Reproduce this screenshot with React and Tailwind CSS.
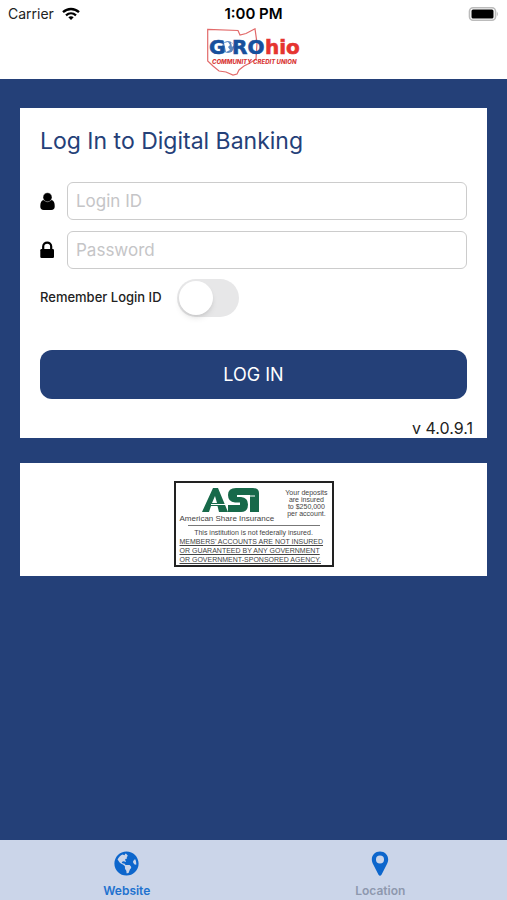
import { useState } from 'react'
import { FaGlobeAmericas } from 'react-icons/fa'

function StatusBar() {
  return (
    <div className="grid h-7 grid-cols-3 items-center px-2 text-sm text-[#222]">
      <div className="flex items-center gap-2">
        <span>Carrier</span>
        <svg viewBox="0 0 18 14" className="h-3.5 w-4.5" fill="none" stroke="#000" strokeWidth="2.3">
          <path d="M1 5.2C5.5 0.9 12.5 0.9 17 5.2" />
          <path d="M4 8.3C7 5.7 11 5.7 14 8.3" />
          <path d="M6.3 10.2C8 8.9 10 8.9 11.7 10.2L9 13Z" fill="#000" stroke="none" />
        </svg>
      </div>
      <span className="text-center text-[15px] font-semibold text-black">1:00 PM</span>
      <svg viewBox="0 0 31 14" className="h-3.5 w-[31px] justify-self-end">
        <rect x="1.5" y="0.8" width="26" height="12.4" rx="3.5" fill="#fff" stroke="#bbb" strokeWidth="1.6" />
        <rect x="3.5" y="2.5" width="22" height="9" rx="1.5" fill="#000" />
        <path d="M28.8 4.5Q31 7 28.8 9.5Z" fill="#bbb" />
      </svg>
    </div>
  )
}

function Logo() {
  return (
    <svg viewBox="0 0 96 50" className="mx-auto h-[50px] w-24" role="img" aria-label="GROhio Community Credit Union">
      <path
        d="M1.7 1.3L32 2.5L34 7L40 5.5L49 0.8L51 15L50 31L44 35L38 38L33 42L31 46L27 47L20 44L13 43L7 38L1.7 33Z"
        fill="#fff"
        stroke="#e26a6a"
        strokeWidth="1.2"
      />
      <circle cx="22" cy="19" r="6" fill="#5d88c0" />
      <path d="M18 15L22 14L24 17L22 19L24 22L20 24L19 19ZM25 14L28 17L26 19Z" fill="#fff" />
      <g fontFamily="DejaVu Sans, sans-serif" fontWeight="700" fontSize="20" strokeWidth="0.6">
        <text x="3" y="26" fill="#17509c" stroke="#17509c">G</text>
        <text x="26" y="26" fill="#17509c" stroke="#17509c">RO</text>
        <text x="59" y="26" fill="#e5342f" stroke="#e5342f">hio</text>
      </g>
      <text
        x="6"
        y="36"
        fill="#d93a38"
        fontFamily="Inter, sans-serif"
        fontWeight="800"
        fontStyle="italic"
        fontSize="6"
      >
        COMMUNITY CREDIT UNION
      </text>
    </svg>
  )
}

function UserIcon() {
  return (
    <svg viewBox="0 0 16 19" className="h-[19px] w-[15px]" aria-hidden="true">
      <path d="M3.5 8Q0.3 9 0.3 14.5Q0.3 18.5 4 18.5H12Q15.7 18.5 15.7 14.5Q15.7 9 12.5 8Q8 11 3.5 8Z" />
      <circle cx="8" cy="5" r="4.8" stroke="#fff" strokeWidth="0.4" />
    </svg>
  )
}

function LockIcon() {
  return (
    <svg viewBox="0 0 15 18" className="h-[18px] w-[15px]" aria-hidden="true">
      <rect x="0.3" y="8" width="13.7" height="9" rx="1.2" />
      <path d="M3.2 9V5.5C3.2 0.3 11.2 0.3 11.2 5.5V9" fill="none" stroke="#000" strokeWidth="2.2" />
    </svg>
  )
}

function PinIcon() {
  return (
    <svg viewBox="0 0 18 26" className="h-[25px] w-[18px]" fill="#0d66cc" aria-hidden="true">
      <path
        fillRule="evenodd"
        d="M9 0.5C4.2 0.5 0.5 4.2 0.5 8.8C0.5 11 1.3 12.5 2 14L7.3 24.5Q9 27 10.7 24.5L16 14C16.7 12.5 17.5 11 17.5 8.8C17.5 4.2 13.8 0.5 9 0.5ZM9 4.7A4.2 4.2 0 1 1 9 13.1A4.2 4.2 0 1 1 9 4.7Z"
      />
    </svg>
  )
}

function InsuranceNotice() {
  return (
    <div className="w-40 border-2 border-[#222] px-1 pb-px font-['Liberation_Sans',sans-serif] text-[#444]">
      <div className="flex justify-between pt-1">
        <div className="w-[102px]">
          <svg viewBox="0 0 102 27" className="h-[27px] w-full" role="img" aria-label="ASI">
            <g fill="#17694a">
              <path d="M22 25L33 1H38L48 25H39L37.5 19H31L29 25ZM32 16H37L35 9Z" fillRule="evenodd" />
              <path d="M69 1H56Q48 1 48 8Q48 15 55 15.5H60V18H48V25H61Q68 25 68 17.5Q68 10.5 61 10H57V8H69Z" />
              <path d="M69 1H73Q79 1 79 6V25H70V8H69Z" />
            </g>
            <path d="M31 17.5H47M58 9H75" stroke="#fff" strokeWidth="1" />
          </svg>
          <p className="text-[8px] leading-[9px] whitespace-nowrap">American Share Insurance</p>
        </div>
        <p className="pt-0.5 text-center text-[7px] leading-[7px] whitespace-nowrap">
          Your deposits
          <br />
          are insured
          <br />
          to $250,000
          <br />
          per account.
        </p>
      </div>
      <hr className="mx-2 mt-0.5 border-[#777]" />
      <p className="pt-0.5 text-center text-[7px] leading-[9px]">This institution is not federally insured.</p>
      <p className="text-[7px] leading-[9px] whitespace-nowrap underline">
        MEMBERS’ ACCOUNTS ARE NOT INSURED
        <br />
        OR GUARANTEED BY ANY GOVERNMENT
        <br />
        OR GOVERNMENT-SPONSORED AGENCY.
      </p>
    </div>
  )
}

function App() {
  const [loginId, setLoginId] = useState('')
  const [password, setPassword] = useState('')
  const [remember, setRemember] = useState(false)

  return (
    <div className="flex min-h-screen flex-col bg-[#244078] font-['Inter',sans-serif] text-black">
      <header className="bg-white pb-px">
        <StatusBar />
        <Logo />
      </header>

      <main className="flex flex-1 flex-col gap-[25px] px-5 pt-[29px] pb-6">
        {/* Login card */}
        <form onSubmit={(e) => e.preventDefault()} className="bg-white px-5 pt-[17px]">
          <h1 className="text-[23px] leading-8 text-[#244078]">Log In to Digital Banking</h1>

          <div className="mt-[25px] flex items-center gap-3">
            <label htmlFor="login-id" aria-label="Login ID">
              <UserIcon />
            </label>
            <input
              id="login-id"
              type="text"
              placeholder="Login ID"
              value={loginId}
              onChange={(e) => setLoginId(e.target.value)}
              className="h-[38px] min-w-0 flex-1 rounded-md border border-[#ccc] px-2 text-[17px] placeholder:text-[#c5c5c7]"
            />
          </div>

          <div className="mt-[11px] flex items-center gap-3">
            <label htmlFor="password" aria-label="Password">
              <LockIcon />
            </label>
            <input
              id="password"
              type="password"
              placeholder="Password"
              value={password}
              onChange={(e) => setPassword(e.target.value)}
              className="h-[38px] min-w-0 flex-1 rounded-md border border-[#ccc] px-2 text-[17px] placeholder:text-[#c5c5c7]"
            />
          </div>

          <label className="mt-[10px] flex w-fit items-center gap-[15px] text-[13px] font-medium text-[#222]">
            Remember Login ID
            <span className="relative flex">
              <input
                type="checkbox"
                checked={remember}
                onChange={(e) => setRemember(e.target.checked)}
                className="peer h-[38px] w-[62px] appearance-none rounded-full bg-[#e7e7e8] checked:bg-[#244078]"
              />
              <span className="pointer-events-none absolute top-0.5 left-0.5 size-[34px] rounded-full bg-white shadow-md peer-checked:translate-x-6" />
            </span>
          </label>

          <button type="submit" className="mt-[33px] h-[49px] w-full rounded-xl bg-[#244078] text-lg text-white">
            LOG IN
          </button>

          <p className="mt-[19px] -mr-1.5 text-right text-base leading-5 text-[#222]">v 4.0.9.1</p>
        </form>

        {/* Insurance card */}
        <section className="flex justify-center bg-white pt-[18px] pb-[9px]">
          <InsuranceNotice />
        </section>
      </main>

      <nav className="grid h-15 grid-cols-2 bg-[#cbd5e9] text-xs font-semibold">
        <a href="#website" className="flex flex-col items-center gap-[7px] pt-[11px] text-[#1f72cf]">
          <FaGlobeAmericas className="size-[25px] text-[#0d66cc]" />
          Website
        </a>
        <a href="#location" className="flex flex-col items-center gap-[7px] pt-[11px] text-[#8e98ae]">
          <PinIcon />
          Location
        </a>
      </nav>
    </div>
  )
}

export default App
